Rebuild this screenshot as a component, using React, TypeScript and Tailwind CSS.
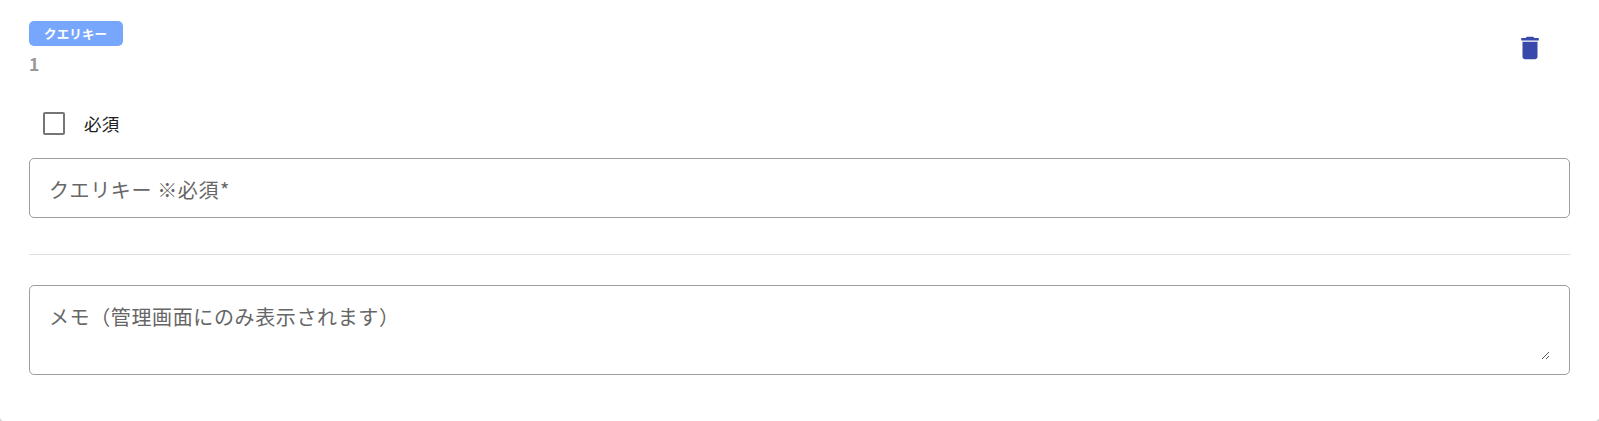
import React from "react";

function DeleteIcon() {
  return (
    <svg viewBox="0 0 24 24" className="block size-[30px] fill-[#3949ab]">
      <path d="M6 19c0 1.1.9 2 2 2h8c1.1 0 2-.9 2-2V7H6v12zM19 4h-3.5l-1-1h-5l-1 1H5v2h14V4z" />
    </svg>
  );
}

function ResizeHandle() {
  return (
    <svg viewBox="0 0 7 7" className="block size-[7px] stroke-[#555]" fill="none" shapeRendering="crispEdges">
      <path d="M0 7L7 0M4 7L7 4" />
    </svg>
  );
}

export default function App() {
  return (
    <div className="h-[421px] w-full bg-[#cccccc] font-['Noto_Sans_CJK_JP',sans-serif]">
      <main className="flex h-full flex-col rounded-b-[4px] bg-white px-[29px] pt-[21px]">
        <header className="flex h-[58px] items-start justify-between pr-[25px]">
          <div>
            <div className="flex h-[25px] w-[94px] items-center rounded-[5px] bg-[#76a7fd] pt-[2px] pl-[15px] text-[12.5px] leading-none font-bold tracking-[0.15px] text-white">
              クエリキー
            </div>
            <div className="mt-[5px] text-[17.5px] leading-[25px] font-bold text-[#999999]">1</div>
          </div>
          <button type="button" aria-label="削除" className="mt-[12px]">
            <DeleteIcon />
          </button>
        </header>

        <label className="mt-[20px] flex h-[49px] items-center pl-[14px]">
          <span className="h-[23px] w-[22px] rounded-[2px] border-2 border-[#757575]" />
          <span className="ml-[19px] text-[17.5px] leading-[25px] tracking-[0.0178em] text-[#212121]">必須</span>
        </label>

        <div className="mt-[10px] flex h-[60px] w-[1541px] items-center rounded-[5px] border border-[#9e9e9e] px-[19px] pt-[4px] text-[20px] leading-[30px] tracking-[0.03125em] text-[#666666]">
          クエリキー ※必須<span className="ml-px">*</span>
        </div>

        <hr className="mt-[36px] w-[1541px] border-[#e0e0e0]" />

        <div className="mt-[30px] flex h-[90px] w-[1541px] items-start justify-between rounded-[5px] border border-[#9e9e9e] pt-[16px] pr-[20px] pl-[19px] text-[20px] leading-[30px] tracking-[0.03125em] text-[#666666]">
          <span>メモ（管理画面にのみ表示されます）</span>
          <span className="mt-[50px]">
            <ResizeHandle />
          </span>
        </div>
      </main>
    </div>
  );
}
